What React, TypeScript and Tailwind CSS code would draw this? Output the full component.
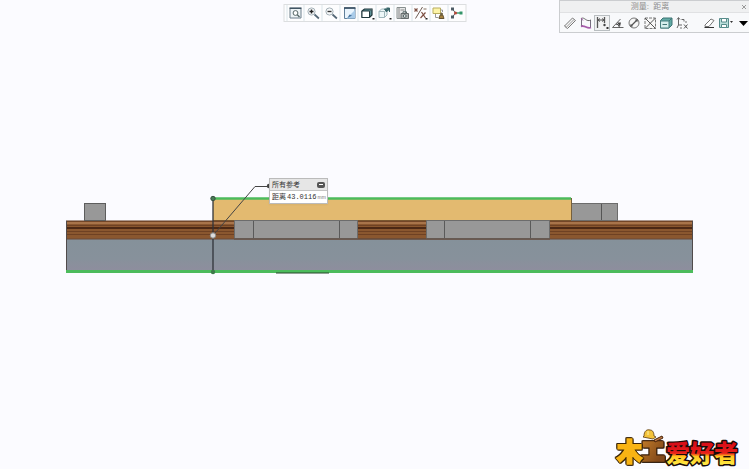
import type { ReactNode } from 'react';

interface Tool {
  label: string;
  icon: ReactNode;
  active?: boolean;
}

const viewTools: Tool[] = [
  {
    label: '重新调整',
    icon: (
      <>
        <path d="M1.5 2.5h11v9.5h-11z" fill="#edf3f6" stroke="#6d7f8b" />
        <path d="M1 2.2h12" stroke="#405463" strokeWidth="1.6" />
        <circle cx="7" cy="7" r="2.4" fill="#fff" />
        <path d="M8.8 8.8l2.2 2.2" strokeWidth="1.4" />
      </>
    ),
  },
  {
    label: '放大',
    icon: (
      <>
        <circle cx="5" cy="5.5" r="3.6" fill="#f7f9fa" stroke="#a5b1b8" />
        <path d="M3 5.5h4M5 3.5v4" stroke="#222" strokeWidth="1.4" />
        <path d="M8 8.5l4.4 4" stroke="#536675" strokeWidth="1.7" />
      </>
    ),
  },
  {
    label: '缩小',
    icon: (
      <>
        <circle cx="5" cy="5.5" r="3.6" fill="#f7f9fa" stroke="#a5b1b8" />
        <path d="M3 5.5h4" stroke="#333" strokeWidth="1.4" />
        <path d="M8 8.5l4.4 4" stroke="#536675" strokeWidth="1.7" />
      </>
    ),
  },
  {
    label: '重画',
    icon: (
      <>
        <path d="M2 2h10.5v10.5H2z" fill="#e9f4fd" stroke="#5f7f9a" />
        <path d="M1.5 2h11.5" stroke="#354c5e" strokeWidth="1.6" />
        <path d="M4 12.5L12.5 4v8.5z" fill="#a9cbe9" stroke="none" />
        <path d="M5 12l4.5-2.5L7 8.5z" fill="#46749f" stroke="none" />
      </>
    ),
  },
  {
    label: '显示样式',
    icon: (
      <>
        <path d="M1.5 5l2.5-2h7.5v6L9 11.5H1.5z" fill="#5f9298" stroke="#20373c" strokeWidth="1.2" />
        <path d="M1.5 5H9v6.5H1.5z" fill="#fff" stroke="#20373c" />
        <path d="M9 5l2.5-2" />
        <path d="M12 12h2v1.5h-2z" fill="#222" stroke="none" />
      </>
    ),
  },
  {
    label: '已保存方向',
    icon: (
      <>
        <path d="M1.5 5.5L4 3h5.5v6L7 11.5H1.5z" fill="#edf7f8" stroke="#9fb6bb" />
        <path d="M1.5 5.5H7v6M7 5.5L9.5 3" stroke="#9fb6bb" />
        <path d="M7 3l2 3 2-3zM9 2h3v4" fill="#376569" stroke="#376569" />
        <path d="M12 12h2v1.5h-2z" fill="#222" stroke="none" />
      </>
    ),
  },
  {
    label: '视图管理器',
    icon: (
      <>
        <path d="M1.5 1.5H10v11H1.5z" fill="#e8e9e9" stroke="#888f8f" />
        <path d="M3.5 2v10M5 4h4" stroke="#888" />
        <path d="M5.5 7.5h7.5v5H5.5z" fill="#aeb1b1" stroke="#666c6c" />
        <circle cx="9.2" cy="10" r="1.4" fill="#eee" />
        <path d="M7.5 7V5.8H11V7" />
      </>
    ),
  },
  {
    label: '基准显示过滤器',
    icon: (
      <>
        <path d="M2 12.5L9 1" stroke="#6e5b52" />
        <path d="M1 2.5l3 3M4 2.5l-3 3M8 6l4 6M12 6.5L7 12" stroke="#7d4f42" strokeWidth="1.2" />
        <path d="M10 3h3" stroke="#85705f" />
        <path d="M12 12h2v1.5h-2z" fill="#222" stroke="none" />
      </>
    ),
  },
  {
    label: '注释显示',
    icon: (
      <>
        <path d="M1.5 2h7.5v5.5H1.5z" fill="#fdf4a8" stroke="#b9ad5e" />
        <path d="M9 4h2v2M4 8v3.5h3" stroke="#999" />
        <path d="M7.5 12.5l1.2-3.5h2.6l1.2 3.5z" fill="#a6823d" stroke="#655332" />
        <circle cx="10" cy="8" r="1.5" fill="#6f6240" stroke="none" />
      </>
    ),
  },
  {
    label: '旋转中心',
    icon: (
      <>
        <path d="M3 3l3 4-3 4" stroke="#596468" />
        <path d="M6 7h6" stroke="#339469" strokeWidth="1.4" />
        <path d="M10 5.5h3v3h-3z" fill="#339469" stroke="none" />
        <path d="M1.5 1.5h3v3h-3zM1.5 9.5h3v3h-3z" fill="#4e5c65" stroke="none" />
        <circle cx="6" cy="7" r="1.5" fill="#b84738" stroke="none" />
      </>
    ),
  },
];

const measureTools: Tool[] = [
  {
    label: '汇总',
    icon: (
      <>
        <path d="M1.5 10l8-8 3 2.5-8 8z" fill="#f5f5f5" stroke="#777" />
        <path d="M1.5 10l3 2.5M3.5 11l7.5-7.5" stroke="#999" />
      </>
    ),
  },
  {
    label: '长度',
    icon: (
      <>
        <path d="M2.5 2v8.5M11.5 4v8" stroke="#777080" />
        <path d="M2 2.5c4-2 5 4 10 1.5" stroke="#666" />
        <path d="M2 10.5c4-2 6 3 10 1" stroke="#a65caa" strokeWidth="1.6" />
        <path d="M2 2l2 2.5M2 11l2-2" stroke="#a65caa" />
      </>
    ),
  },
  {
    label: '距离',
    active: true,
    icon: (
      <>
        <path d="M2.5 1v11M9.5 1v6" stroke="#555" strokeWidth="1.3" />
        <path d="M3 4h6M5 2.5L3 4l2 1.5M7 2.5L9 4 7 5.5" stroke="#555" />
        <circle cx="9.5" cy="9" r="1.2" fill="#444" stroke="none" />
        <path d="M11.5 11h2v2h-2z" fill="#333" stroke="none" />
      </>
    ),
  },
  {
    label: '角度',
    icon: (
      <>
        <path d="M12.5 11.5h-11L9.5 3" stroke="#666" />
        <path d="M5 8q3 0 3.5 3.5" stroke="#444" />
        <path d="M6 6.5h4l-1 4z" fill="#444" stroke="none" />
      </>
    ),
  },
  {
    label: '直径',
    icon: (
      <>
        <circle cx="7" cy="7" r="5" fill="#f6f6f6" stroke="#777" />
        <path d="M3.5 10.5l7-7" stroke="#555" strokeWidth="1.2" />
        <path d="M3.2 10.8l.5-3 2.5 2.5zM10.8 3.2l-.5 3-2.5-2.5z" fill="#555" stroke="none" />
      </>
    ),
  },
  {
    label: '面积',
    icon: (
      <>
        <path d="M2 2h10.5v10.5H2z" fill="#f7f7f7" stroke="#777" strokeDasharray="3 1" />
        <path d="M2 2l10.5 10.5M12.5 2L2 12.5" stroke="#555" />
      </>
    ),
  },
  {
    label: '体积',
    icon: (
      <>
        <path d="M1.5 4.5L4 2h9v7l-3 3H1.5z" fill="#62aaa5" stroke="#3d7575" />
        <path d="M1.5 5H10v7H1.5z" fill="#d6efed" stroke="#477e7e" />
        <path d="M3.5 8.5H8M10 5l3-3" stroke="#437575" />
      </>
    ),
  },
  {
    label: '变换',
    icon: (
      <>
        <path d="M3.5 2v7h3.5M3.5 9L2 12" stroke="#666" />
        <path d="M2 3.5L3.5 1.5 5 3.5M6.5 3.5H9v2" stroke="#666" />
        <path d="M9 8.5l3.5 4M12.5 8.5L9 12.5" stroke="#555" />
        <path d="M5 12h2M11 5v2" stroke="#777" />
      </>
    ),
  },
];

const resultTools: Tool[] = [
  {
    label: '清除',
    icon: (
      <>
        <path d="M3 9l6-6 3 1.5-5 6H3z" fill="#fff" stroke="#777" />
        <path d="M2.5 11.5H12" stroke="#333" />
      </>
    ),
  },
  {
    label: '保存',
    icon: (
      <>
        <path d="M1.5 2.5h9v9h-9z" fill="#b9ddda" stroke="#568b8a" />
        <path d="M3.5 2.5h5V6h-5zM3.5 8.5h5v3h-5z" fill="#fff" stroke="#568b8a" />
        <path d="M12 5h3l-1.5 2z" fill="#333" stroke="none" />
      </>
    ),
  },
  {
    label: '展开',
    icon: <path d="M5 5h9l-4.5 5z" fill="#000" stroke="none" />,
  },
];

function ToolIcon({ children }: { children: ReactNode }) {
  return (
    <svg viewBox="0 0 14 14" className="size-3.5 shrink-0 overflow-visible" fill="none" stroke="#566" strokeWidth="1" aria-hidden="true">
      {children}
    </svg>
  );
}

function ViewToolbar() {
  return (
    <div role="toolbar" aria-label="视图" className="flex h-[18px] w-[183px] border border-[#dcdee0] bg-[#fdfdfe] pl-[2px]">
      {viewTools.map((tool) => (
        <button key={tool.label} aria-label={tool.label} title={tool.label} className="flex flex-1 items-center justify-center border-l border-[#dce5e9] hover:bg-sky-50">
          <ToolIcon>{tool.icon}</ToolIcon>
        </button>
      ))}
    </div>
  );
}

function MeasureButton({ tool }: { tool: Tool }) {
  return (
    <button
      aria-label={tool.label}
      title={tool.label}
      aria-pressed={tool.active}
      className={`flex h-4 w-4 shrink-0 items-center justify-center ${tool.active ? 'border border-[#b9bec1] bg-[#f1f2f3]' : ''}`}
    >
      <ToolIcon>{tool.icon}</ToolIcon>
    </button>
  );
}

function MeasurePanel() {
  return (
    <section className="w-[190px] border border-r-0 border-[#cbcdd0] bg-[#f8f9fb]">
      <header className="flex h-3 items-center border-b border-[#e0e1e3] bg-[#eff0f1] text-[8px] leading-3 text-[#8c8c8c]">
        <h1 className="flex-1 text-center">测量:&nbsp; 距离</h1>
        <button aria-label="关闭" className="mr-px h-3 w-2">
          <svg viewBox="0 0 8 8" className="size-2" stroke="#999" aria-hidden="true">
            <path d="M2 2l4 4M6 2L2 6" />
          </svg>
        </button>
      </header>
      <div className="flex h-[19px] items-center justify-between pl-[2px]">
        <div className="flex">
          {measureTools.map((tool) => <MeasureButton key={tool.label} tool={tool} />)}
        </div>
        <div className="flex">
          {resultTools.map((tool) => <MeasureButton key={tool.label} tool={tool} />)}
        </div>
      </div>
    </section>
  );
}

function Laminate({ x, width }: { x: number; width: number }) {
  return (
    <g>
      <rect x={x} y="221" width={width} height="18" fill="#8a572f" />
      <path d={`M${x} 221h${width}`} stroke="#5c3620" />
      <path d={`M${x} 223h${width}`} stroke="#a8744a" strokeWidth="2" />
      <path d={`M${x} 225.5h${width}M${x} 231.5h${width}M${x} 234.5h${width}`} stroke="#6e4123" />
      <path d={`M${x} 228h${width}`} stroke="#4c2814" strokeWidth="2" />
      <path d={`M${x} 239h${width}`} stroke="#6a4a38" />
    </g>
  );
}

function ModelDrawing() {
  return (
    <svg viewBox="0 0 749 469" className="block w-full" role="img" aria-label="模型侧视图">
      <defs>
        <linearGradient id="base" x1="0" y1="0" x2="0" y2="1">
          <stop offset="0" stopColor="#85919a" />
          <stop offset="0.6" stopColor="#87919b" />
          <stop offset="1" stopColor="#8f8d9e" />
        </linearGradient>
      </defs>
      <rect x="66" y="239" width="627" height="33" fill="url(#base)" />
      <Laminate x={66} width={627} />
      <path d="M66.5 221v51M692.5 221v51" stroke="#504b4b" />
      <rect x="84.5" y="203.5" width="21" height="17" fill="#989898" stroke="#5d5d5d" />
      <rect x="571.5" y="203.5" width="46" height="17" fill="#989898" stroke="#6c6c6c" />
      <path d="M601.5 204v16" stroke="#555" />
      <rect x="213" y="199" width="358" height="22" fill="#e3ba70" />
      <path d="M213 220.5h358" stroke="#79562f" />
      <path d="M571.5 198v22" stroke="#77603c" />
      <g fill="#989898" stroke="#6c6c6c">
        <path d="M234.5 220.5h123v18h-123zM426.5 220.5h123v18h-123z" />
        <path d="M253.5 221v17M339.5 221v17M444.5 221v17M530.5 221v17" fill="none" stroke="#5a5a5a" />
      </g>
      <path d="M234 239h316" stroke="#60483a" />
      <path d="M213 198.5h358" stroke="#4cbb5c" strokeWidth="2.5" />
      <path d="M66 271.5h627" stroke="#4cbb5c" strokeWidth="3" />
      <path d="M276 273h53" stroke="#26452b" />
      <path d="M213 198v74" stroke="#30343a" strokeWidth="1.3" />
      <path d="M213 235.5l42-49h14" fill="none" stroke="#444" />
      <circle cx="213" cy="198.5" r="2.2" fill="#477b54" stroke="#364f40" />
      <circle cx="213" cy="272" r="2.2" fill="#3d7a4a" />
      <circle cx="213" cy="235.5" r="2.7" fill="#ddd" stroke="#888" />
      <circle cx="269" cy="186" r="2.2" fill="#444" />
    </svg>
  );
}

function DistanceCallout() {
  return (
    <section className="w-[59px] border border-[#bbb] bg-white text-[7px] leading-3 text-[#333] shadow-xs">
      <header className="flex h-3 items-center justify-between border-b border-[#c4c4c4] bg-[#e6e6e6] px-[2px]">
        <h2>所有参考</h2>
        <button aria-label="折叠" className="flex h-[6px] w-2 items-center justify-center rounded-xs bg-[#555]">
          <span className="h-px w-1 bg-white" />
        </button>
      </header>
      <div className="flex h-3 items-center justify-between pr-px pl-[2px]">
        <span>距离</span>
        <span className="font-['Liberation_Mono','Liberation_Sans',monospace]">43.0116</span>
        <span className="text-[5px] text-[#777]">mm</span>
      </div>
    </section>
  );
}

function Logo() {
  return (
    <svg viewBox="0 0 128 44" className="h-11 w-32 overflow-visible" role="img" aria-label="木工爱好者">
      <defs>
        <linearGradient id="fire" x1="0" y1="0" x2="0" y2="1">
          <stop offset="0.3" stopColor="#d80f18" />
          <stop offset="0.55" stopColor="#e8201a" />
          <stop offset="0.64" stopColor="#ffc51d" />
          <stop offset="0.9" stopColor="#fff04a" />
        </linearGradient>
        <linearGradient id="timber" x1="0" y1="0" x2="1" y2="1">
          <stop offset="0.2" stopColor="#b87426" />
          <stop offset="0.8" stopColor="#82491a" />
        </linearGradient>
      </defs>
      <g fontFamily="'Noto Sans CJK SC', sans-serif" fontWeight="900">
        <text
          x="25"
          y="34"
          fontSize="22"
          fill="url(#timber)"
          stroke="url(#timber)"
          strokeWidth="3"
          className="[filter:drop-shadow(-1px_0_0_#3a1f0a)_drop-shadow(0_-1px_0_#3a1f0a)_drop-shadow(1px_1px_0_#2a1606)]"
        >
          工
        </text>
        <text
          x="0"
          y="36"
          fontSize="25"
          fill="#f9b414"
          stroke="#f9b414"
          strokeWidth="2"
          className="[filter:drop-shadow(-1px_0_0_#3a2407)_drop-shadow(0_-1px_0_#3a2407)_drop-shadow(1px_1px_0_#3a2407)]"
        >
          木
        </text>
        <text x="49" y="37" fontSize="24" fill="url(#fire)" stroke="#190b08" strokeWidth="3" strokeLinejoin="round" paintOrder="stroke">
          爱好者
        </text>
      </g>
      <path d="M27 11c0-5 3-7 6-6 3 0 4 3 4 6l2 1-3 2-10-2z" fill="#f3c23a" stroke="#5a3a10" strokeWidth="0.8" />
      <path d="M37 15l8-4 1 2-8 4z" fill="#c07a45" stroke="#4a250b" />
      <path d="M31 6v4" stroke="#fff1a1" />
    </svg>
  );
}

export default function App() {
  return (
    <main className="relative min-h-screen w-full overflow-hidden bg-[#fbfbff] font-['Liberation_Sans','Noto_Sans_CJK_SC',sans-serif]">
      <div className="relative w-full">
        <ModelDrawing />
        <div className="absolute top-[38%] left-[35.9%]">
          <DistanceCallout />
        </div>
      </div>
      <div className="absolute top-1 left-1/2 -translate-x-1/2">
        <ViewToolbar />
      </div>
      <div className="absolute top-0 right-0">
        <MeasurePanel />
      </div>
      <div className="absolute right-1 bottom-0">
        <Logo />
      </div>
    </main>
  );
}
